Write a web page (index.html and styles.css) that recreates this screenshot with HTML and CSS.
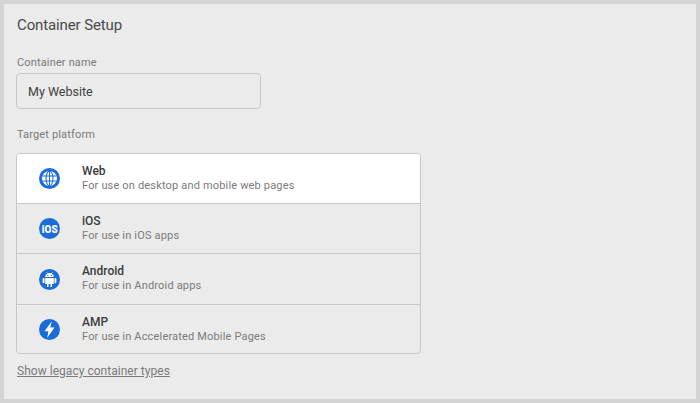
FILE: index.html
```html
<!DOCTYPE html>
<html lang="en">
<head>
<meta charset="utf-8">
<title>Container Setup</title>
<link rel="stylesheet" href="styles.css">
</head>
<body>
<main class="panel">
  <h1 class="title">Container Setup</h1>
  <label class="label label-name">Container name</label>
  <div class="input">My Website</div>
  <div class="label label-platform">Target platform</div>
  <ul class="platforms">
    <li class="platform platform-active">
      <svg class="icon" viewBox="0 0 22 22"><circle cx="11" cy="11" r="11" fill="#1a6dd9"/><circle cx="11" cy="11" r="7.800" fill="#fff"/><g fill="none" stroke="#1a6dd9" stroke-width="1.100"><ellipse cx="11" cy="11" rx="3.600" ry="7.800"/><path d="M11 3.200v15.600M3.600 8.400h14.800M3.600 13.600h14.800"/></g></svg>
      <div class="text"><div class="name">Web</div><div class="desc">For use on desktop and mobile web pages</div></div>
    </li>
    <li class="platform">
      <svg class="icon" viewBox="0 0 22 22"><circle cx="11" cy="11" r="11" fill="#1a6dd9"/><text class="ios-mark" x="3" y="15.200" textLength="16.500" lengthAdjust="spacingAndGlyphs">iOS</text></svg>
      <div class="text"><div class="name">iOS</div><div class="desc">For use in iOS apps</div></div>
    </li>
    <li class="platform platform-tall">
      <svg class="icon" viewBox="0 0 22 22"><circle cx="11" cy="11" r="11" fill="#1a6dd9"/><g fill="#fff"><path d="M6.500 8.500a4.500 4.300 0 0 1 9 0z"/><path d="M6.500 9.300h9v6.500h-1.900v3h-1.600v-3h-2v3H8.400v-3H6.500z"/><rect x="3.800" y="9.300" width="2" height="5.600" rx="1"/><rect x="16.200" y="9.300" width="2" height="5.600" rx="1"/></g><path d="M8 3.500l1.200 1.600M14 3.500l-1.200 1.600" stroke="#fff" stroke-width=".7"/><g fill="#1a6dd9"><circle cx="9.200" cy="6.700" r=".6"/><circle cx="12.800" cy="6.700" r=".6"/></g></svg>
      <div class="text"><div class="name">Android</div><div class="desc">For use in Android apps</div></div>
    </li>
    <li class="platform platform-last">
      <svg class="icon" viewBox="0 0 22 22"><circle cx="11" cy="11" r="11" fill="#1a6dd9"/><path fill="#fff" d="M13.400 2.400 5.800 12.800h4.100L8.500 19.800l7.700-10.800h-4.300z"/></svg>
      <div class="text"><div class="name">AMP</div><div class="desc">For use in Accelerated Mobile Pages</div></div>
    </li>
  </ul>
  <a class="legacy" href="#">Show legacy container types</a>
</main>
</body>
</html>
```
FILE: styles.css
```css
* { box-sizing: border-box; }
html, body { margin: 0; height: 100%; }
body {
  background: #d4d4d4;
  padding: 4px;
  font-family: Roboto, "Liberation Sans", sans-serif;
}
.panel {
  height: 395px;
  background: #ebebeb;
  padding: 12px 12px 0;
  display: flex;
  flex-direction: column;
  align-items: flex-start;
}
.title {
  margin: 0 0 0 1px;
  font-size: 15px;
  font-weight: 400;
  line-height: 18px;
  color: #4a4a4a;
  letter-spacing: -.12px;
}
.label {
  margin-left: 1px;
  font-size: 11px;
  line-height: 14px;
  color: #7a7a7a;
  letter-spacing: .15px;
}
.label-name { margin-top: 22px; }
.input {
  margin-top: 3px;
  width: 245px;
  height: 36px;
  padding-left: 11px;
  border: 1px solid #c8c8c8;
  border-radius: 4px;
  font-size: 12.500px;
  line-height: 35px;
  color: #404040;
}
.label-platform { margin-top: 19px; }
.platforms {
  list-style: none;
  margin: 11px 0 0;
  padding: 0;
  width: 405px;
  border: 1px solid #c8c8c8;
  border-radius: 4px;
  overflow: hidden;
}
.platform {
  display: flex;
  align-items: center;
  height: 50px;
  padding-left: 22px;
  border-top: 1px solid #c8c8c8;
}
.platform-active { height: 49px; border-top: 0; background: #fff; }
.platform-tall { height: 51px; }
.platform-tall .text { margin-bottom: 2px; }
.platform-last { height: 49px; }
.icon { width: 21px; height: 21px; flex: none; }
.ios-mark {
  fill: #fff;
  font-size: 12px;
  font-weight: 900;
}
.text { margin-left: 22px; }
.name {
  font-size: 12px;
  font-weight: 500;
  line-height: 14px;
  color: #3c3c3c;
}
.desc {
  margin-top: 1px;
  font-size: 11px;
  line-height: 14px;
  color: #7a7a7a;
  letter-spacing: .17px;
}
.legacy {
  margin: 9px 0 0 1px;
  font-size: 12px;
  line-height: 16px;
  color: #7a7a7a;
  letter-spacing: .03px;
}
```
